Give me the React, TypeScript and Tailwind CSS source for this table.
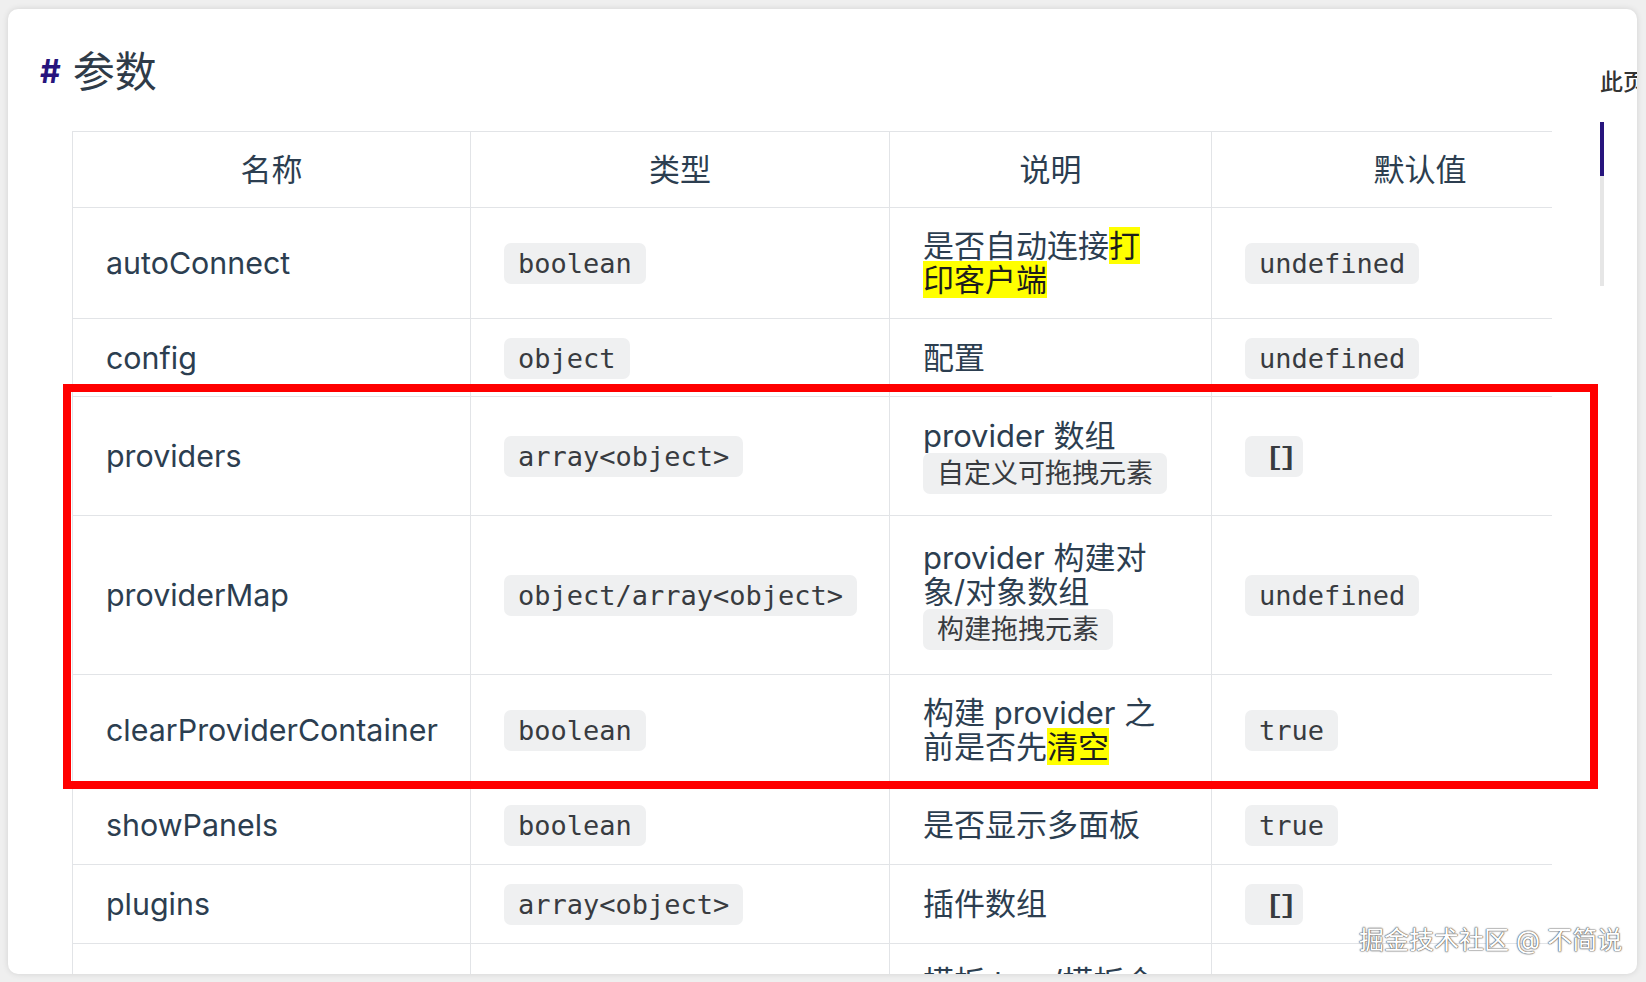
import type { ReactNode } from "react";

type Row = {
  name: string;
  type: string;
  desc: ReactNode;
  def: string;
  h: string;
};

function Code({ children }: { children: ReactNode }) {
  // "[]" is drawn tight so the two brackets close into a box, as in the page
  const empty = children === "[]";
  return (
    <code className="whitespace-nowrap rounded-[7px] bg-[#eff0f1] px-[14px] py-[5px] font-['DejaVu_Sans_Mono','Noto_Sans_CJK_SC',monospace] text-[27px] text-[#383b40]">
      {empty ? (
        <span className="inline-block w-[30px] origin-center scale-x-[1.6] pl-[7px] tracking-[-7.5px]">[]</span>
      ) : (
        children
      )}
    </code>
  );
}

function Tag({ children }: { children: ReactNode }) {
  return (
    <span className="inline-block whitespace-nowrap rounded-[7px] bg-[#eff0f1] px-[14px] py-[4px] font-['DejaVu_Sans_Mono','Noto_Sans_CJK_SC',monospace] text-[27px] leading-[33px] text-[#383b40]">
      {children}
    </span>
  );
}

function Mark({ children }: { children: ReactNode }) {
  return <mark className="bg-[#ffff00] text-[#1c1c1c]">{children}</mark>;
}

const rows: Row[] = [
  {
    name: "autoConnect",
    type: "boolean",
    desc: (
      <>
        是否自动连接<Mark>打印客户端</Mark>
      </>
    ),
    def: "undefined",
    h: "h-[111px]",
  },
  { name: "config", type: "object", desc: "配置", def: "undefined", h: "h-[78px]" },
  {
    name: "providers",
    type: "array<object>",
    desc: (
      <>
        provider 数组
        <br />
        <Tag>自定义可拖拽元素</Tag>
      </>
    ),
    def: "[]",
    h: "h-[119px]",
  },
  {
    name: "providerMap",
    type: "object/array<object>",
    desc: (
      <>
        provider 构建对象/对象数组
        <br />
        <Tag>构建拖拽元素</Tag>
      </>
    ),
    def: "undefined",
    h: "h-[159px]",
  },
  {
    name: "clearProviderContainer",
    type: "boolean",
    desc: (
      <>
        构建 provider 之前是否先<Mark>清空</Mark>
      </>
    ),
    def: "true",
    h: "h-[111px]",
  },
  { name: "showPanels", type: "boolean", desc: "是否显示多面板", def: "true", h: "h-[79px]" },
  { name: "plugins", type: "array<object>", desc: "插件数组", def: "[]", h: "h-[79px]" },
  {
    name: "templates",
    type: "array<object>",
    desc: "模板 tree/模板合集数据列表",
    def: "[]",
    h: "h-[111px]",
  },
];

const heads = ["名称", "类型", "说明", "默认值"];

export default function App() {
  return (
    <div className="relative h-[982px] w-[1646px] overflow-hidden bg-[#efefef] pl-[8px] pt-[9px] font-['Inter','Noto_Sans_CJK_SC',sans-serif] text-[#2c3e50]">
      <div className="flex h-[965px] w-[1629px] overflow-hidden rounded-[10px] bg-white shadow-[0_0_6px_rgba(0,0,0,0.12)]">
        <div className="w-[1544px] shrink-0">
          <div className="ml-[32px] mt-[38px] flex h-[50px] items-center gap-[12px]">
            <span className="text-[32px] font-bold text-[#27157d]">#</span>
            <h2 className="text-[42px] leading-[50px] text-[#2f3b48]">参数</h2>
          </div>

          <div className="ml-[64px] mt-[34px] w-[1480px] overflow-hidden">
            <table className="w-[1556px] table-fixed border-collapse text-[31px] leading-[34px]">
              <colgroup>
                <col className="w-[398px]" />
                <col className="w-[419px]" />
                <col className="w-[322px]" />
                <col />
              </colgroup>
              <thead>
                <tr className="h-[76px]">
                  {heads.map((h) => (
                    <th
                      key={h}
                      className="border-b border-l border-t border-[#e2e4e7] text-center align-middle font-normal"
                    >
                      {h}
                    </th>
                  ))}
                </tr>
              </thead>
              <tbody>
                {rows.map((r) => (
                  <tr key={r.name} className={r.h}>
                    <td className="border-b border-l border-[#e2e4e7] px-[33px] align-middle text-[30.4px]">{r.name}</td>
                    <td className="border-b border-l border-[#e2e4e7] px-[33px] align-middle">
                      <Code>{r.type}</Code>
                    </td>
                    <td className="border-b border-l border-[#e2e4e7] pl-[33px] pr-[48px] align-middle">{r.desc}</td>
                    <td className="border-b border-l border-[#e2e4e7] px-[33px] align-middle">
                      <Code>{r.def}</Code>
                    </td>
                  </tr>
                ))}
              </tbody>
            </table>
          </div>
        </div>

        <aside className="ml-[48px] shrink-0">
          <div className="mt-[60px] whitespace-nowrap text-[23px] font-medium leading-[27px] text-[#333]">此页内容</div>
          <div className="mt-[26px] h-[164px] w-[4px] bg-[#e6e6e6]">
            <div className="h-[54px] w-[4px] bg-[#27157d]" />
          </div>
        </aside>
      </div>

      {/* annotation */}
      <div className="pointer-events-none absolute left-[63px] top-[384px] h-[405px] w-[1535px] border-[8px] border-[#ff0000]" />

      <div className="absolute left-[1359px] top-[925px] whitespace-nowrap text-[25px] leading-[30px] text-white [text-shadow:0_0_1px_#555,0_0_1px_#555,0_0_2px_#666]">
        掘金技术社区 @ 不简说
      </div>
    </div>
  );
}
